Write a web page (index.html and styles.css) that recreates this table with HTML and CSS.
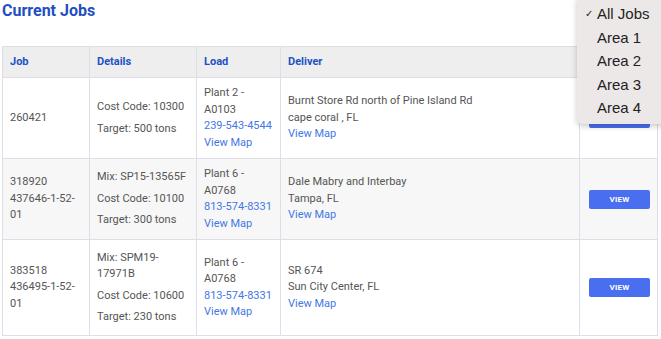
FILE: index.html
```html
<!DOCTYPE html>
<html>
<head>
<meta charset="utf-8">
<link rel="stylesheet" href="styles.css">
</head>
<body>
<div class="page">
  <h1 class="title">Current Jobs</h1>
  <table class="jobs">
    <colgroup>
      <col class="c-job"><col class="c-details"><col class="c-load"><col class="c-deliver"><col class="c-action">
    </colgroup>
    <thead>
      <tr><th>Job</th><th>Details</th><th>Load</th><th>Deliver</th><th></th></tr>
    </thead>
    <tbody>
      <tr>
        <td><div>260421</div></td>
        <td><div class="para">Cost Code: 10300</div><div class="para">Target: 500 tons</div></td>
        <td><div>Plant 2 -<br>A0103</div><a class="link">239-543-4544</a><br><a class="link">View Map</a></td>
        <td><div>Burnt Store Rd north of Pine Island Rd</div><div>cape coral , FL</div><a class="link">View Map</a></td>
        <td><button class="btn">VIEW</button></td>
      </tr>
      <tr class="alt">
        <td><div>318920</div><div>437646-1-52-<br>01</div></td>
        <td><div class="para">Mix: SP15-13565F</div><div class="para">Cost Code: 10100</div><div class="para">Target: 300 tons</div></td>
        <td><div>Plant 6 -<br>A0768</div><a class="link">813-574-8331</a><br><a class="link">View Map</a></td>
        <td><div>Dale Mabry and Interbay</div><div>Tampa, FL</div><a class="link">View Map</a></td>
        <td><button class="btn">VIEW</button></td>
      </tr>
      <tr>
        <td><div>383518</div><div>436495-1-52-<br>01</div></td>
        <td><div class="para">Mix: SPM19-<br>17971B</div><div class="para">Cost Code: 10600</div><div class="para">Target: 230 tons</div></td>
        <td><div>Plant 6 -<br>A0768</div><a class="link">813-574-8331</a><br><a class="link">View Map</a></td>
        <td><div>SR 674</div><div>Sun City Center, FL</div><a class="link">View Map</a></td>
        <td><button class="btn">VIEW</button></td>
      </tr>
    </tbody>
  </table>
  <ul class="menu">
    <li class="checked">All Jobs</li>
    <li>Area 1</li>
    <li>Area 2</li>
    <li>Area 3</li>
    <li>Area 4</li>
  </ul>
</div>
</body>
</html>
```
FILE: styles.css
```css
html, body { margin: 0; padding: 0; background: #fff; }
.page {
  position: relative;
  padding: 0 2px;
  font-family: Roboto, "Liberation Sans", sans-serif;
  color: #555;
}
.title {
  margin: 0;
  padding-top: 1px;
  height: 45px;
  font-size: 16px;
  font-weight: 700;
  color: #1f4fc2;
  line-height: 20px;
}
.jobs {
  width: 655px;
  border-collapse: collapse;
  table-layout: fixed;
  font-size: 11px;
  line-height: 16.5px;
  border: 1px solid #e0e0ea;
}
.c-job { width: 87px; }
.c-details { width: 107px; }
.c-load { width: 84px; }
.c-deliver { width: 299px; }
.c-action { width: 78px; }
.jobs th {
  background: #eeeeee;
  color: #2152c4;
  font-weight: 700;
  text-align: left;
  height: 30px;
  padding: 0 7px;
  border: 1px solid #dedee8;
}
.jobs td {
  padding: 7px 7px;
  border: 1px solid #dedee8;
  vertical-align: middle;
}
.jobs tr.alt td { background: #f7f7f7; }
.para { padding: 2.5px 0; }
.link { color: #4477e6; text-decoration: none; }
.btn {
  display: block;
  margin: 0 0 0 2px;
  width: 61px;
  height: 19px;
  border: none;
  border-radius: 2px;
  background: #4a6ef0;
  color: #fff;
  font-family: Roboto, "Liberation Sans", sans-serif;
  font-size: 8px;
  font-weight: 700;
  padding: 0;
  letter-spacing: 0.2px;
}
.menu {
  position: absolute;
  top: -2px;
  left: 577px;
  width: 90px;
  margin: 0;
  padding: 4px 0 4px;
  list-style: none;
  background: #ede8e8;
  border-radius: 0 0 0 6px;
  box-shadow: 0 2px 6px rgba(0,0,0,0.22);
  font-family: "Liberation Sans", Arial, sans-serif;
  font-size: 15px;
  color: #222;
}
.menu li {
  height: 23.5px;
  line-height: 23.5px;
  padding-left: 20px;
  position: relative;
}
.menu li.checked::before {
  content: "\2713";
  position: absolute;
  left: 8px;
  top: 0;
  font-size: 10px;
  font-family: "DejaVu Sans", sans-serif;
}
```
